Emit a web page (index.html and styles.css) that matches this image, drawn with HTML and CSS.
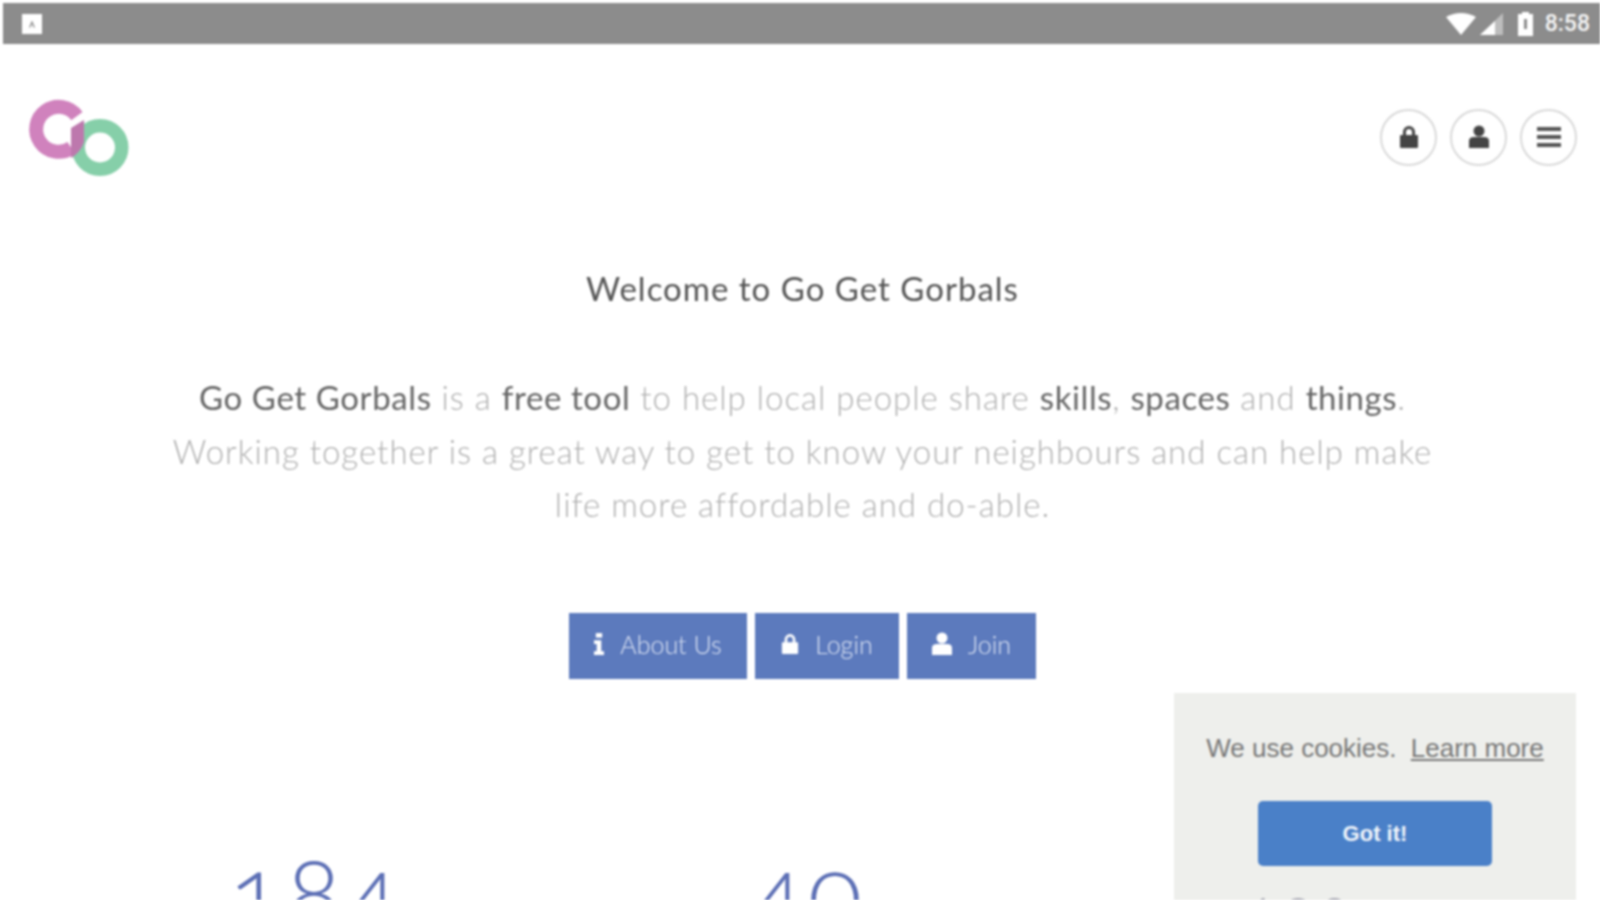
FILE: index.html
```html
<!DOCTYPE html>
<html lang="en">
<head>
    <meta charset="UTF-8">
    <meta name="viewport" content="width=device-width, initial-scale=1.0">
    <title>Go Get Gorbals</title>
    <link rel="stylesheet" href="styles.css">
</head>
<body>
    <div class="page">
        <div class="status-bar">
            <span class="status-note"><svg width="14" height="14" viewBox="0 0 14 14"><path d="M4 10.5L7 3.5L10 10.5H8.6L7 7L5.4 10.5Z" fill="#8c8c8c"/></svg></span>
            <div class="status-right">
                <svg class="wifi" width="30" height="22" viewBox="0 0 30 22"><path d="M0 4Q15 -4 30 4L15 22Z" fill="#fff"/></svg>
                <svg class="signal" width="24" height="22" viewBox="0 0 24 22"><path d="M23 0V22H0Z" fill="#bdbdbd"/><path d="M15 8V22H0Z" fill="#fff"/></svg>
                <svg class="battery" width="17" height="24" viewBox="0 0 17 24"><path d="M5 0H12V2H16V24H1V2H5Z" fill="#fff"/><rect x="7" y="7" width="3" height="10" fill="#8c8c8c"/></svg>
                <span class="clock">8:58</span>
            </div>
        </div>

        <header class="top">
            <svg class="logo" width="104" height="84" viewBox="0 0 104 84">
                <path d="M50.9 22.1A22.5 22.5 0 1 0 45.4 53.9" fill="none" stroke="#d082bd" stroke-width="14"/>
                <circle cx="74" cy="53.5" r="21.75" fill="none" stroke="#86cfa9" stroke-width="13.5"/>
                <path d="M45 34L58 26V48Q55 58 45 64Z" fill="#bd78ad"/>
            </svg>
            <nav class="top-nav">
                <a class="round-btn"><svg width="20" height="24" viewBox="0 0 20 24"><path d="M4 11V7a6 6 0 0 1 12 0v4h-3V7a3 3 0 0 0-6 0v4z" fill="#444"/><rect x="1" y="10" width="18" height="13" rx="1" fill="#444"/></svg></a>
                <a class="round-btn"><svg width="20" height="24" viewBox="0 0 20 24"><circle cx="10" cy="6" r="5.5" fill="#444"/><path d="M0 23V16Q0 12 5 12H15Q20 12 20 16V23Z" fill="#444"/></svg></a>
                <a class="round-btn"><svg width="24" height="20" viewBox="0 0 24 20"><path d="M0 0H24V4H0ZM0 8H24V12H0ZM0 16H24V20H0Z" fill="#555"/></svg></a>
            </nav>
        </header>

        <main class="intro">
            <h1>Welcome to Go Get Gorbals</h1>
            <p>
                <b>Go Get Gorbals</b> is a <b>free tool</b> to help local people share <b>skills</b>, <b>spaces</b> and <b>things</b>.<br>
                Working together is a great way to get to know your neighbours and can help make<br>
                life more affordable and do-able.
            </p>
            <div class="actions">
                <a class="btn about"><svg width="10" height="22" viewBox="0 0 11 24"><rect x="2" y="0" width="7" height="5" fill="#fff"/><path d="M0 8H8V20H11V24H0V20H3V12H0Z" fill="#fff"/></svg>About Us</a>
                <a class="btn login"><svg width="18" height="22" viewBox="0 0 20 24"><path d="M4 11V7a6 6 0 0 1 12 0v4h-3V7a3 3 0 0 0-6 0v4z" fill="#fff"/><rect x="1" y="10" width="18" height="13" rx="1" fill="#fff"/></svg>Login</a>
                <a class="btn join"><svg width="20" height="24" viewBox="0 0 20 24"><circle cx="10" cy="6" r="5.5" fill="#fff"/><path d="M0 23V16Q0 12 5 12H15Q20 12 20 16V23Z" fill="#fff"/></svg>Join</a>
            </div>
        </main>

        <section class="stats">
            <div class="stat">184</div>
            <div class="stat">40</div>
            <div class="stat stat-low">120</div>
        </section>

        <div class="cookie">
            <div class="cookie-text">We use cookies. <a>Learn more</a></div>
            <a class="cookie-btn">Got it!</a>
        </div>
    </div>
</body>
</html>
```

FILE: styles.css
```css
* {
    box-sizing: border-box;
}

html, body {
    margin: 0;
    height: 900px;
    overflow: hidden;
    background: #fff;
}

.page {
    position: relative;
    height: 900px;
    overflow: hidden;
    padding-top: 3px;
    padding-left: 3px;
    font-family: 'Lato', sans-serif;
    font-weight: 300;
    filter: blur(0.8px);
}

.status-bar {
    height: 41px;
    background-color: #8c8c8c;
    display: flex;
    align-items: center;
    justify-content: space-between;
    padding: 0 10px 0 19px;
}

.status-note {
    width: 20px;
    height: 20px;
    background: #fff;
    display: flex;
    align-items: center;
    justify-content: center;
}

.status-right {
    display: flex;
    align-items: center;
    gap: 4px;
}

.battery {
    margin-left: 9px;
}

.clock {
    margin-left: 7px;
    color: #f4f4f4;
    font-family: 'Roboto', sans-serif;
    font-weight: 500;
    font-size: 23px;
}

.top {
    display: flex;
    justify-content: space-between;
    align-items: center;
    padding: 50px 23px 0 26px;
    margin-left: -3px;
}

.top-nav {
    display: flex;
    gap: 13px;
    margin-top: 2px;
}

.round-btn {
    width: 57px;
    height: 57px;
    border: 2px solid #d9d9d9;
    border-radius: 50%;
    display: flex;
    align-items: center;
    justify-content: center;
}

.intro {
    text-align: center;
    margin-left: -3px;
    width: 1605px;
}

h1 {
    margin: 86px 0 0;
    font-size: 33px;
    font-weight: 400;
    line-height: 48px;
    letter-spacing: 1px;
    color: #555;
}

p {
    margin: 59px 0 0;
    font-size: 33px;
    line-height: 53.6px;
    letter-spacing: 1px;
    color: #aeaeae;
}

p b {
    font-weight: 400;
    letter-spacing: 0.6px;
    color: #666;
}

.actions {
    display: flex;
    justify-content: center;
    gap: 8px;
    margin-top: 81px;
}

.btn {
    height: 66px;
    padding-bottom: 4px;
    background-color: #5c7abd;
    color: #dfe6f5;
    font-size: 25px;
    display: flex;
    align-items: center;
    justify-content: center;
    gap: 16px;
}

.about {
    width: 178px;
}

.login {
    width: 144px;
}

.join {
    width: 129px;
}

.stats {
    display: grid;
    grid-template-columns: repeat(3, 492px);
    margin: 0 0 0 67px;
    padding-top: 162px;
}

.stat {
    text-align: center;
    font-size: 100px;
    line-height: 96px;
    letter-spacing: 4px;
    color: #5c6fb5;
    font-variant-numeric: oldstyle-nums;
    font-weight: 300;
}

/* third figure only just shows at the foot of the cookie box */
.stat-low {
    position: relative;
    z-index: 2;
    padding-top: 47px;
    font-size: 56px;
    line-height: 56px;
    color: #a9a9b4;
    font-variant-numeric: lining-nums;
}

.cookie {
    position: absolute;
    left: 1174px;
    top: 693px;
    width: 402px;
    height: 207px;
    background: #eeefec;
    text-align: center;
    padding-top: 40px;
}

.cookie-text {
    font-family: 'Liberation Sans', sans-serif;
    font-size: 26px;
    line-height: 30px;
    color: #777;
    font-weight: 400;
}

.cookie-text a {
    margin-left: 7px;
    text-decoration: underline;
}

.cookie-btn {
    display: block;
    width: 234px;
    height: 65px;
    margin: 38px auto 0;
    border-radius: 5px;
    background-color: #4a80c8;
    color: #f2f6fb;
    font-family: 'Liberation Sans', sans-serif;
    font-size: 22px;
    font-weight: 700;
    line-height: 65px;
}
```
